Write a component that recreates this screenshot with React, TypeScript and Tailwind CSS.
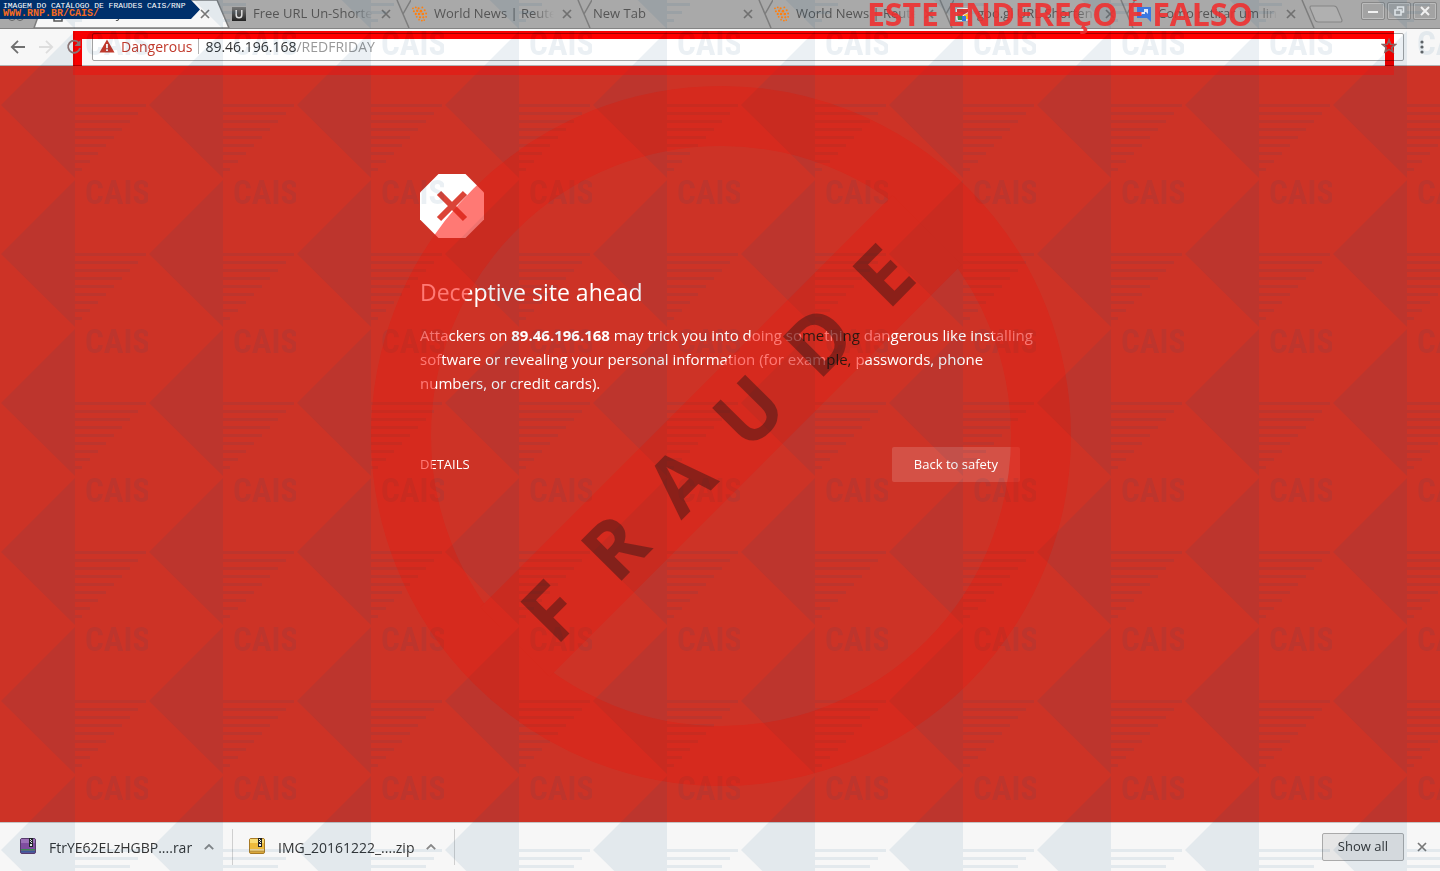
import React from 'react';

type TabInfo = { title: string; icon?: 'u' | 'reuters' | 'googl' | 'chat' };

const tabs: TabInfo[] = [
  { title: 'Free URL Un-Shortener', icon: 'u' },
  { title: 'World News | Reuters.com', icon: 'reuters' },
  { title: 'New Tab' },
  { title: 'World News | Reuters.com', icon: 'reuters' },
  { title: 'goo.gl URL Shortener', icon: 'googl' },
  { title: 'Como retirar um link', icon: 'chat' },
];

const reutersDots: [number, number, number][] = [
  [1, 2, 1], [4, 1, 1], [7, 2, 1.2], [11, 1, 1], [2, 5, 1.1], [5.5, 4.5, 1.3], [9.5, 5, 1.4], [13.5, 4, 1.1],
  [4, 8, 1.2], [7.5, 8, 1.4], [11.5, 8, 1.4], [15, 7.5, 1], [5, 11, 1], [8.5, 11.5, 1.2], [12, 11.5, 1.2], [15, 11, 1],
  [7.5, 14, 0.9], [10.5, 15, 1], [13, 14.5, 0.9],
];

function Favicon({ kind }: { kind: TabInfo['icon'] }) {
  if (kind === 'u')
    return (
      <svg viewBox="0 0 16 16" className="size-4 shrink-0" aria-hidden="true">
        <defs>
          <linearGradient id="u-shade" x1="0" y1="0" x2="0" y2="1">
            <stop offset="0" stopColor="#777" />
            <stop offset="1" stopColor="#222" />
          </linearGradient>
        </defs>
        <rect x="1" y="1" width="14" height="14" fill="url(#u-shade)" />
        <path d="M5.200 4v5q0 2.800 2.800 2.800t2.800-2.800V4" fill="none" stroke="#ddd" strokeWidth="1.500" />
      </svg>
    );
  if (kind === 'reuters')
    return (
      <svg viewBox="0 0 17 16" className="size-4 shrink-0" aria-hidden="true">
        {reutersDots.map(([x, y, r]) => (
          <circle key={`${x}-${y}`} cx={x} cy={y} r={r} fill="#ff7f0e" />
        ))}
      </svg>
    );
  if (kind === 'googl')
    return (
      <svg viewBox="0 0 16 16" className="size-4 shrink-0" aria-hidden="true">
        <rect x="1" y="2" width="13" height="13" rx="2" fill="#eee" />
        <path d="M2 3h11v3L8 9 2 6z" fill="#d93a35" />
        <path d="M2 7l5 2v5H3z" fill="#3a9c4a" />
        <path d="M9 9l5-2v6H9z" fill="#f2c028" />
        <path d="M7 10h4v5H7z" fill="#3c79e0" />
      </svg>
    );
  if (kind === 'chat')
    return (
      <svg viewBox="0 0 16 16" className="size-4 shrink-0" aria-hidden="true">
        <path d="M1 1h14v15l-4-4H1z" fill="#3b78e0" />
        <path d="M4 6h5v2H6l-2 2z M8 3h4v5l-2-2H8z" fill="#dfe8f7" />
      </svg>
    );
  return null;
}

function Cross({ className }: { className: string }) {
  return (
    <svg viewBox="0 0 10 10" className={className} aria-hidden="true">
      <path d="M1 1l8 8M9 1L1 9" fill="none" stroke="currentColor" strokeWidth="1.700" />
    </svg>
  );
}

function TabEdge({ last = false }: { last?: boolean }) {
  return (
    <svg viewBox="0 0 16 28" className="h-7 w-4 shrink-0" aria-hidden="true">
      <path d={last ? 'M2 0l12 28' : 'M2 0l12 28M16 0L8 14'} fill="none" stroke="#7d7d7d" strokeWidth="1.500" />
    </svg>
  );
}

function Tab({ title, icon, last }: TabInfo & { last: boolean }) {
  return (
    <div className="flex h-7 w-[181px] shrink items-center overflow-hidden">
      <div className="flex min-w-0 flex-1 items-center">
        <button
          type="button"
          role="tab"
          aria-selected="false"
          className="flex min-w-0 flex-1 items-center gap-[6px] overflow-hidden pl-px text-left whitespace-nowrap text-[#555] [mask-image:linear-gradient(to_right,black_85%,transparent)]"
        >
          <Favicon kind={icon} />
          <span>{title}</span>
        </button>
        <button type="button" aria-label={`Close ${title}`} className="ml-2 text-[#707070]">
          <Cross className="size-[10px]" />
        </button>
      </div>
      <div className="w-1 shrink-0" />
      <TabEdge last={last} />
    </div>
  );
}

function WindowButton({ label, children }: { label: string; children: React.ReactNode }) {
  return (
    <button type="button" aria-label={label} className="flex h-[18px] w-6 items-center justify-center rounded-xs border border-[#888] bg-[#a3a3a3] shadow-[inset_0_0_0_1px_#bcbcbc]">
      <svg viewBox="0 0 14 12" className="h-3 w-[14px]" fill="none" stroke="#f1f1f1" strokeWidth="1.500" aria-hidden="true">
        {children}
      </svg>
    </button>
  );
}

function TabStrip() {
  return (
    <div role="tablist" className="flex h-7 items-center bg-[#a9a9a9] text-[13px]">
      <div className="relative flex h-7 w-[230px] shrink-0 items-center">
        <svg viewBox="0 0 230 28" className="absolute inset-0 h-7 w-[230px]" aria-hidden="true">
          <path d="M34 28L44 0H217l12 28z" fill="#f7f7f7" stroke="#7d7d7d" strokeWidth="1.500" />
          <path d="M54 8h8v13h-8z" fill="none" stroke="#555" strokeWidth="1.500" />
          <circle cx="12" cy="17" r="3.500" fill="none" stroke="#666" />
          <circle cx="20" cy="17" r="3.500" fill="none" stroke="#666" />
        </svg>
        <button type="button" role="tab" aria-selected="true" className="relative ml-[74px] flex-1 text-left text-[#444]">
          Security error
        </button>
        <button type="button" aria-label="Close Security error" className="relative mr-5 text-[#777]">
          <Cross className="size-[10px]" />
        </button>
      </div>
      {tabs.map((tab, i) => (
        <Tab key={i} {...tab} last={i === tabs.length - 1} />
      ))}
      <button type="button" aria-label="New tab" className="-ml-2 shrink-0">
        <svg viewBox="0 0 36 18" className="h-[18px] w-9" aria-hidden="true">
          <path d="M3 1h23q2 0 3 2l5 12q0 2-1 2H10q-2 0-3-2L2 3q0-2 1-2z" fill="#b0b0b0" stroke="#858585" strokeWidth="1.200" />
        </svg>
      </button>
      <div className="flex-1" />
      <div className="mr-[3px] mb-[6px] flex gap-[2px]">
        <WindowButton label="Minimize">
          <path d="M2 7h10" strokeWidth="2" />
        </WindowButton>
        <WindowButton label="Restore">
          <path d="M5.500 4V2h6v5h-2M3 5h6v5H3z" strokeWidth="1.600" />
        </WindowButton>
        <WindowButton label="Close">
          <path d="M3 2l8 8M11 2l-8 8" strokeWidth="2" />
        </WindowButton>
      </div>
    </div>
  );
}

function Toolbar() {
  return (
    <div className="flex h-[38px] items-center border-t border-b border-t-[#848484] border-b-[#b3b3b3] bg-[#f7f7f7] pl-[10px] text-[14px]">
      <div className="flex w-[82px] shrink-0 gap-3">
        <button type="button" aria-label="Back" className="text-[#707070]">
          <svg viewBox="0 0 16 16" className="size-4" fill="none" stroke="currentColor" strokeWidth="1.800" aria-hidden="true">
            <path d="M15 8H2.500M8 1.800L1.800 8 8 14.200" />
          </svg>
        </button>
        <button type="button" aria-label="Forward" className="text-[#ddd]">
          <svg viewBox="0 0 16 16" className="size-4" fill="none" stroke="currentColor" strokeWidth="1.800" aria-hidden="true">
            <path d="M1 8h12.500M8 1.800L14.200 8 8 14.200" />
          </svg>
        </button>
        <button type="button" aria-label="Reload" className="relative z-10 text-[#8a7474]">
          <svg viewBox="0 0 16 16" className="size-4" fill="none" stroke="currentColor" strokeWidth="1.800" aria-hidden="true">
            <path d="M13 4.200A6 6 0 1 0 14 9" />
            <path d="M14.500 1v6h-6z" fill="currentColor" stroke="none" />
          </svg>
        </button>
      </div>
      <div className="flex h-7 flex-1 items-center rounded-xs border border-[#a3a3a3] bg-white px-[6px] pb-[2px]">
        <svg viewBox="0 0 16 14" className="mr-[6px] h-[14px] w-4 shrink-0" aria-hidden="true">
          <path d="M8 0.500L15.500 13.500H0.500z" fill="#c1392b" />
          <path d="M7.100 5h1.800v4.200H7.100zM7.100 10.300h1.800V12H7.100z" fill="#fff" />
        </svg>
        <span className="text-[#c1392b]">Dangerous</span>
        <span className="mx-[6px] h-4 w-px bg-[#b5b5b5]" />
        <label htmlFor="address" className="text-[#333]">
          89.46.196.168
        </label>
        <input id="address" defaultValue="/REDFRIDAY" className="min-w-0 flex-1 text-[#999] outline-none" />
        <button type="button" aria-label="Bookmark this page" className="relative z-10 text-[#8a6464]">
          <svg viewBox="0 0 16 16" className="size-4" fill="none" stroke="currentColor" strokeWidth="1.700" aria-hidden="true">
            <path d="M8 2l1.700 4.300 4.500.3-3.500 2.900 1.200 4.400L8 11.400l-3.900 2.500 1.200-4.400L1.800 6.600l4.500-.3z" />
          </svg>
        </button>
      </div>
      <button type="button" aria-label="Menu" className="flex w-9 justify-center text-[#666]">
        <svg viewBox="0 0 4 14" className="h-[14px] w-1" fill="currentColor" aria-hidden="true">
          <circle cx="2" cy="2" r="1.600" />
          <circle cx="2" cy="7" r="1.600" />
          <circle cx="2" cy="12" r="1.600" />
        </svg>
      </button>
    </div>
  );
}

function ArchiveIcon({ tone }: { tone: 'purple' | 'gold' }) {
  const c =
    tone === 'purple'
      ? { top: '#a873bd', mid: '#8a4ea2', a: '#3f8f52', b: '#2d5f9b', edge: '#5d3a6b' }
      : { top: '#f9dc74', mid: '#eebb3c', a: '#f2d9a0', b: '#c9963a', edge: '#a87a25' };
  return (
    <svg viewBox="0 0 16 16" className="mb-[2px] size-4" aria-hidden="true">
      <rect x="0.500" y="0.500" width="15" height="15" rx="1.500" fill={c.mid} stroke={c.edge} />
      <rect x="1" y="1" width="14" height="4" fill={c.top} />
      <path d="M1 11h14v1.500H1z" fill={c.a} />
      <path d="M1 13.200h14v1.300H1z" fill={c.b} />
      <path d="M9 0h4v9H9z" fill="#222" />
      <path d="M10 1h1v1h-1zM11 2h1v1h-1zM10 3h1v1h-1zM11 4h1v1h-1zM10 6h2v2h-2z" fill="#eee" />
    </svg>
  );
}

function Download({ name, tone }: { name: string; tone: 'purple' | 'gold' }) {
  return (
    <div className="flex h-9 items-center border-r border-[#cfcfcf] pr-[18px] pl-4">
      <button type="button" className="flex items-center gap-[13px] text-[#333]">
        <ArchiveIcon tone={tone} />
        <span>{name}</span>
      </button>
      <button type="button" aria-label={`Options for ${name}`} className="ml-3 text-[#888]">
        <svg viewBox="0 0 10 6" className="h-[6px] w-[10px]" fill="none" stroke="currentColor" strokeWidth="1.800" aria-hidden="true">
          <path d="M0.800 5.200L5 1l4.200 4.200" />
        </svg>
      </button>
    </div>
  );
}

function Warning() {
  return (
    <main className="flex-1 bg-[#cd3326] px-6 pt-[108px] text-white">
      <div className="mx-auto max-w-[600px]">
        <svg viewBox="0 0 64 64" className="block size-16" aria-hidden="true">
          <path d="M18.500 0h27L64 18.500v27L45.500 64h-27L0 45.500v-27z" fill="#fff" />
          <path d="M19 19l26 26M45 19L19 45" stroke="#db4437" strokeWidth="6" />
        </svg>
        <h1 className="mt-10 text-[23px] leading-[29px]">Deceptive site ahead</h1>
        <p className="-mr-4 mt-4 text-[15px] leading-6">
          Attackers on <strong>89.46.196.168</strong> may trick you into doing so<span className="text-black">me</span>thi
          <span className="text-black">ng</span> dangerous like installing software or revealing your personal
          information (for exam<span className="text-black">ple,</span> passwords, phone numbers, or credit cards).
        </p>
        <div className="mt-[52px] flex items-center justify-between text-[13px]">
          <button type="button" className="uppercase">
            Details
          </button>
          <button type="button" className="h-[35px] rounded-xs bg-white/15 px-[22px]">
            Back to safety
          </button>
        </div>
      </div>
    </main>
  );
}

function SealShape({ color }: { color: string }) {
  return (
    <g fill="none" stroke={color}>
      <circle r="320" strokeWidth="60" />
      <path d="M-206 206L206-206" strokeWidth="98" />
    </g>
  );
}

function Watermark() {
  return (
    <svg className="pointer-events-none absolute inset-0 h-full w-full" aria-hidden="true">
      <defs>
        <pattern id="cais" y="31" width="148" height="149" patternUnits="userSpaceOnUse">
          <g fill="#004678">
            <path d="M1 74L75 0V147z" />
            {Array.from({ length: 9 }, (_, i) => (
              <rect key={i} x="75" y={73 + i * 8} width={71 - i * 8} height="3" />
            ))}
            <text x="85" y="24" fontSize="33" fontWeight="700" fontFamily="'Liberation Sans Narrow', 'Roboto Condensed', 'Liberation Sans', sans-serif">
              CAIS
            </text>
          </g>
        </pattern>
      </defs>
      <rect width="100%" height="100%" fill="url(#cais)" opacity="0.080" />
    </svg>
  );
}

function Seal() {
  return (
    <>
      <svg viewBox="-361 -360 720 720" className="pointer-events-none absolute inset-0 m-auto size-[720px] mix-blend-multiply" aria-hidden="true">
        <SealShape color="#ff6c6c" />
      </svg>
      <svg viewBox="-361 -360 720 720" className="pointer-events-none absolute inset-0 m-auto size-[720px] mix-blend-screen" aria-hidden="true">
        <SealShape color="#2d160e" />
      </svg>
      <svg viewBox="-361 -360 720 720" className="pointer-events-none absolute inset-0 m-auto size-[720px]">
        <text
          transform="translate(-160 206) rotate(-45.300)"
          x="-7 79 171 266 366 465"
          fontSize="80"
          fontWeight="700"
          fill="#0a1014"
          fillOpacity="0.370"
        >
          FRAUDE
        </text>
      </svg>
    </>
  );
}

export default function App() {
  return (
    <div className="relative isolate flex min-h-screen flex-col overflow-hidden font-['Open_Sans','Noto_Sans',sans-serif]">
      <header>
        <TabStrip />
        <Toolbar />
      </header>
      <Warning />
      <footer className="flex h-[49px] items-center border-t border-[#c4c4c4] bg-[#f7f7f7] pl-1 text-[14px]">
        <Download name="FtrYE62ELzHGBP....rar" tone="purple" />
        <Download name="IMG_20161222_....zip" tone="gold" />
        <div className="flex-1" />
        <button type="button" className="h-7 rounded-xs border border-[#aaa] bg-[#e6e6e6] px-[15px] text-[13px] text-[#333]">
          Show all
        </button>
        <button type="button" aria-label="Close downloads bar" className="mr-[13px] ml-[13px] text-[#777]">
          <Cross className="size-[10px]" />
        </button>
      </footer>

      <Watermark />
      <Seal />

      <div className="pointer-events-none absolute top-[31px] right-[46px] left-[73px] h-[35px] border-x-9 border-t-8 border-[#ff0000] mix-blend-multiply" />
      <div className="pointer-events-none absolute top-[66px] right-[46px] left-[73px] h-[9px] bg-[#ff0000]/35" />
      <p className="pointer-events-none absolute top-0 right-[187px] text-[32px] leading-[28px] font-bold whitespace-nowrap text-[#ee3030]/90">
        ESTE ENDEREÇO É FALSO
      </p>

      <div className="absolute top-0 left-0 h-[19px] w-[200px] bg-[#00306c] pt-[2px] pl-[3px] font-['Liberation_Mono',monospace] whitespace-nowrap [clip-path:polygon(0_0,191px_0,100%_50%,191px_100%,0_100%)]">
        <p className="text-[8px] leading-[8px] text-white">IMAGEM DO CATÁLOGO DE FRAUDES CAIS/RNP</p>
        <p className="text-[10px] leading-[8px] font-bold text-[#f26a21]">WWW.RNP.BR/CAIS/</p>
      </div>
    </div>
  );
}
